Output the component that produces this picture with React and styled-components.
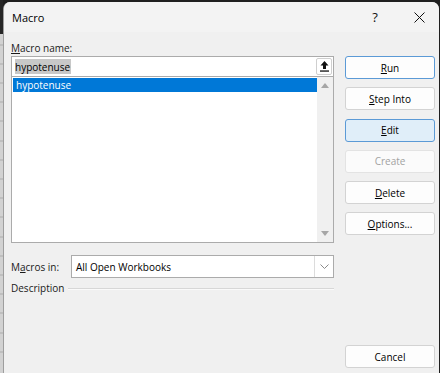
import styled, { createGlobalStyle } from 'styled-components';

const GlobalStyle = createGlobalStyle`
  html, body {
    margin: 0;
    padding: 0;
    background: #1f1f1f;
  }
  body {
    font-family: "Open Sans", "Noto Sans", sans-serif;
    font-size: 10px;
    color: #000;
  }
`;

const Screen = styled.div`
  display: flex;
  width: 440px;
  height: 373px;
  padding-top: 2px;
  box-sizing: border-box;
  overflow: hidden;
`;

const SheetEdge = styled.div`
  width: 3px;
  margin-top: -2px;
  background:
    linear-gradient(#262626, #262626) top / 100% 34px no-repeat,
    repeating-linear-gradient(to bottom, #d2d2d2 0 18.2px, #ababab 18.2px 19.2px);
  background-position: 0 0, 0 -12.5px;
`;

const Dialog = styled.div`
  width: 436px;
  display: flex;
  flex-direction: column;
  background: #f0f0f0;
  border-left: 1px solid #9e9e9e;
  border-radius: 7px 7px 0 0;
  overflow: hidden;
  box-sizing: border-box;
`;

const TitleBar = styled.div`
  height: 30px;
  display: flex;
  align-items: center;
  padding-left: 8px;
  background: #f3f3f3;
`;

const Title = styled.span`
  flex: 1;
  font-size: 11px;
  color: #000;
`;

const CaptionButton = styled.div`
  width: 40px;
  height: 30px;
  display: flex;
  align-items: center;
  justify-content: center;
  font-size: 13px;
  color: #111;
  margin-right: ${p => p.$gap || 0}px;
`;

const Body = styled.div`
  flex: 1;
  display: flex;
  gap: 11px;
  padding: 8px 4px 5px 7px;
`;

const LeftCol = styled.div`
  width: 323px;
  display: flex;
  flex-direction: column;
`;

const Label = styled.div`
  line-height: 16px;
  color: #1a1a1a;
  white-space: nowrap;
  width: ${p => (p.$width ? `${p.$width}px` : 'auto')};
  flex-shrink: 0;
`;

const U = styled.span`
  text-decoration: underline;
  text-underline-offset: 1px;
`;

const NameField = styled.div`
  height: 21px;
  box-sizing: border-box;
  border: 1px solid #ababab;
  background: #fff;
  display: flex;
  align-items: center;
  padding-left: 3px;
`;

const Selected = styled.span`
  flex: 1;
  & > span {
    background: #c8c8c8;
    line-height: 14px;
    padding: 1px 1px 0 0;
    display: inline-block;
  }
`;

const PickButton = styled.div`
  width: 16px;
  height: 17px;
  box-sizing: border-box;
  margin-right: 1px;
  border: 1px solid #cfcfcf;
  border-radius: 2px;
  background: #fff;
  display: flex;
  align-items: center;
  justify-content: center;
`;

const ListBox = styled.div`
  margin-top: -1px;
  height: 167px;
  box-sizing: border-box;
  border: 1px solid #ababab;
  background: #fff;
  display: flex;
`;

const Items = styled.div`
  flex: 1;
  padding: 1px 0 0 1px;
`;

const Item = styled.div`
  height: 14px;
  line-height: 14px;
  padding-left: 3px;
  background: ${p => (p.$active ? '#0078d7' : 'transparent')};
  color: ${p => (p.$active ? '#fff' : '#000')};
`;

const ScrollBar = styled.div`
  width: 16px;
  background: #f0f0f0;
  display: flex;
  flex-direction: column;
  justify-content: space-between;
`;

const ScrollArrow = styled.div`
  height: 17px;
  display: flex;
  align-items: center;
  justify-content: center;
`;

const SelectRow = styled.div`
  margin-top: 12px;
  display: flex;
  align-items: center;
`;

const Select = styled.div`
  flex: 1;
  height: 23px;
  box-sizing: border-box;
  border: 1px solid #ababab;
  background: #fff;
  display: flex;
  align-items: center;
`;

const SelectValue = styled.span`
  flex: 1;
  padding-left: 4px;
`;

const SelectButton = styled.div`
  width: 18px;
  height: 100%;
  border-left: 1px solid #dcdcdc;
  display: flex;
  align-items: center;
  justify-content: center;
`;

const GroupRow = styled.div`
  margin-top: 2px;
  display: flex;
  align-items: center;
  gap: 4px;
`;

const Rule = styled.div`
  flex: 1;
  border-top: 1px solid #d7d7d7;
  border-bottom: 1px solid #fafafa;
  margin-top: 1px;
`;

const RightCol = styled.div`
  width: 90px;
  display: flex;
  flex-direction: column;
  gap: 8.3px;
  padding-top: 16px;
`;

const Button = styled.div`
  height: 23px;
  box-sizing: border-box;
  border-radius: 3px;
  display: flex;
  align-items: center;
  justify-content: center;
  background: ${p => (p.$hover ? '#e0eef9' : p.$disabled ? '#fbfbfb' : '#fdfdfd')};
  border: 1px solid ${p => (p.$primary || p.$hover ? '#5b9ad6' : p.$disabled ? '#e3e3e3' : '#d3d3d3')};
  color: ${p => (p.$disabled ? '#a2a2a2' : '#000')};
  margin-top: ${p => (p.$bottom ? 'auto' : '0')};
`;

const Triangle = ({ up }) => (
  <svg width="8" height="5" viewBox="0 0 8 5">
    <polygon points={up ? '4,0 8,5 0,5' : '0,0 8,0 4,5'} fill="#a6a6a6" />
  </svg>
);

export default function App() {
  return (
    <>
      <GlobalStyle />
      <Screen>
        <SheetEdge />
        <Dialog>
          <TitleBar>
            <Title>Macro</Title>
            <CaptionButton $gap={4}>?</CaptionButton>
            <CaptionButton>
              <svg width="11" height="11" viewBox="0 0 11 11">
                <path d="M0.5 0.5 L10.5 10.5 M10.5 0.5 L0.5 10.5" stroke="#111" strokeWidth="1" />
              </svg>
            </CaptionButton>
          </TitleBar>
          <Body>
            <LeftCol>
              <Label><U>M</U>acro name:</Label>
              <NameField>
                <Selected><span>hypotenuse</span></Selected>
                <PickButton>
                  <svg width="9" height="11" viewBox="0 0 9 11">
                    <polygon points="4.5,0 8.5,4.5 6,4.5 6,8 3,8 3,4.5 0.5,4.5" fill="#111" />
                    <rect x="0" y="9.4" width="9" height="1.3" fill="#111" />
                  </svg>
                </PickButton>
              </NameField>
              <ListBox>
                <Items>
                  <Item $active>hypotenuse</Item>
                </Items>
                <ScrollBar>
                  <ScrollArrow><Triangle up /></ScrollArrow>
                  <ScrollArrow><Triangle /></ScrollArrow>
                </ScrollBar>
              </ListBox>
              <SelectRow>
                <Label $width={60}>M<U>a</U>cros in:</Label>
                <Select>
                  <SelectValue>All Open Workbooks</SelectValue>
                  <SelectButton>
                    <svg width="9" height="5" viewBox="0 0 9 5">
                      <polyline points="0.5,0.5 4.5,4.5 8.5,0.5" fill="none" stroke="#8a8a8a" strokeWidth="1" />
                    </svg>
                  </SelectButton>
                </Select>
              </SelectRow>
              <GroupRow>
                <Label>Description</Label>
                <Rule />
              </GroupRow>
            </LeftCol>
            <RightCol>
              <Button $primary><U>R</U>un</Button>
              <Button><U>S</U>tep Into</Button>
              <Button $hover><U>E</U>dit</Button>
              <Button $disabled>Create</Button>
              <Button><U>D</U>elete</Button>
              <Button><U>O</U>ptions...</Button>
              <Button $bottom>Cancel</Button>
            </RightCol>
          </Body>
        </Dialog>
      </Screen>
    </>
  );
}
